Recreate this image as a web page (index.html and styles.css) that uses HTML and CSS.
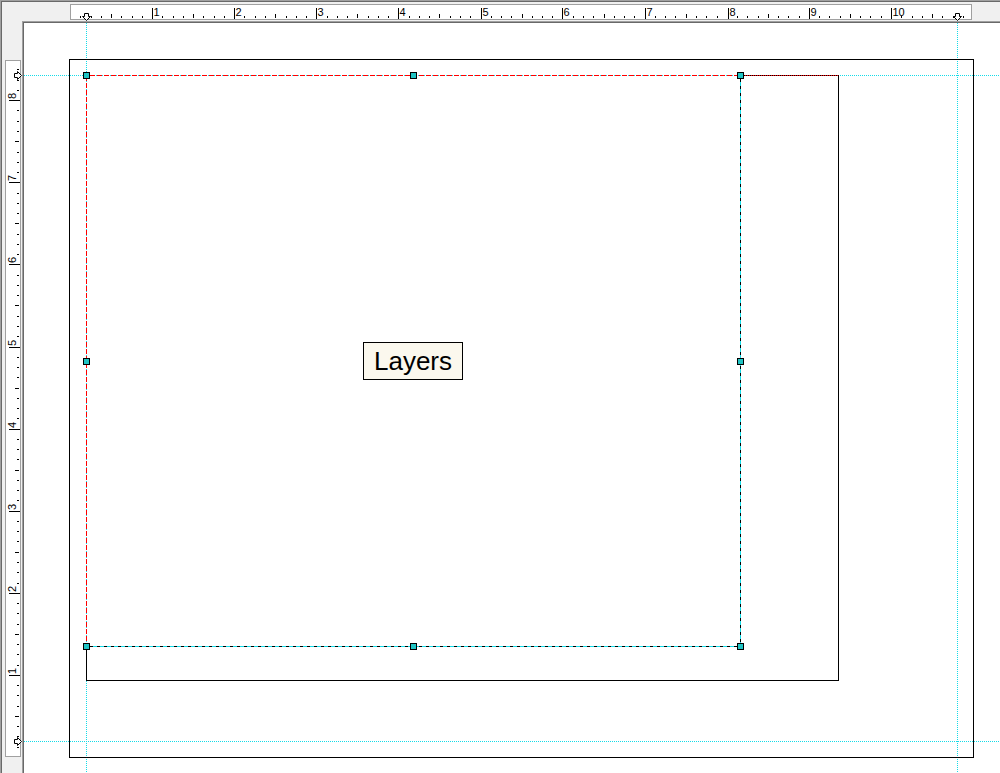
FILE: index.html
```html
<!DOCTYPE html>
<html>
<head>
<meta charset="utf-8">
<title>Layers</title>
<link rel="stylesheet" href="styles.css">
</head>
<body>
<div class="window">
  <div class="frame">
    <div class="corner"></div>
    <div class="top-strip">
      <svg class="hruler" width="902" height="16" viewBox="70 4 902 16">
        <rect class="ruler-bg" x="70.5" y="4.5" width="901" height="15"/>
        <path class="tick" d="M80.5 16v2M91.5 16v2M101.5 16v2M121.5 16v2M132.5 16v2M142.5 16v2M162.5 16v2M173.5 16v2M183.5 16v2M203.5 16v2M214.5 16v2M224.5 16v2M244.5 16v2M255.5 16v2M265.5 16v2M286.5 16v2M296.5 16v2M306.5 16v2M327.5 16v2M337.5 16v2M347.5 16v2M368.5 16v2M378.5 16v2M388.5 16v2M409.5 16v2M419.5 16v2M429.5 16v2M450.5 16v2M460.5 16v2M470.5 16v2M491.5 16v2M501.5 16v2M511.5 16v2M532.5 16v2M542.5 16v2M552.5 16v2M573.5 16v2M583.5 16v2M593.5 16v2M614.5 16v2M624.5 16v2M634.5 16v2M655.5 16v2M665.5 16v2M675.5 16v2M696.5 16v2M706.5 16v2M717.5 16v2M737.5 16v2M747.5 16v2M758.5 16v2M778.5 16v2M788.5 16v2M799.5 16v2M819.5 16v2M829.5 16v2M840.5 16v2M860.5 16v2M870.5 16v2M881.5 16v2M901.5 16v2M912.5 16v2M922.5 16v2M942.5 16v2M953.5 16v2M963.5 16v2"/>
        <path class="tick" d="M111.5 14v4M193.5 14v4M275.5 14v4M357.5 14v4M439.5 14v4M522.5 14v4M604.5 14v4M686.5 14v4M768.5 14v4M850.5 14v4M932.5 14v4"/>
        <path class="tick" d="M152.5 8v11M234.5 8v11M316.5 8v11M398.5 8v11M481.5 8v11M562.5 8v11M645.5 8v11M728.5 8v11M809.5 8v11M891.5 8v11"/>
        <g class="ruler-num">
          <text x="153.5" y="16">1</text>
          <text x="235.5" y="16">2</text>
          <text x="317.5" y="16">3</text>
          <text x="399.5" y="16">4</text>
          <text x="482.5" y="16">5</text>
          <text x="563.5" y="16">6</text>
          <text x="646.5" y="16">7</text>
          <text x="729.5" y="16">8</text>
          <text x="810.5" y="16">9</text>
          <text x="892.5" y="16">10</text>
        </g>
        <polygon class="marker" points="84.5,13.5 88.5,13.5 88.5,16.5 90.5,16.5 86.5,20.5 82.5,16.5 84.5,16.5"/>
        <polygon class="marker" points="955.5,13.5 959.5,13.5 959.5,16.5 961.5,16.5 957.5,20.5 953.5,16.5 955.5,16.5"/>
      </svg>
    </div>
    <div class="left-strip">
      <svg class="vruler" width="16" height="697" viewBox="5 60 16 697">
        <rect class="ruler-bg" x="5.5" y="60.5" width="15" height="696"/>
        <path class="tick" d="M17 747.5h2M17 736.5h2M17 726.5h2M17 706.5h2M17 695.5h2M17 685.5h2M17 665.5h2M17 654.5h2M17 644.5h2M17 624.5h2M17 613.5h2M17 603.5h2M17 583.5h2M17 572.5h2M17 562.5h2M17 541.5h2M17 531.5h2M17 521.5h2M17 500.5h2M17 490.5h2M17 480.5h2M17 459.5h2M17 449.5h2M17 439.5h2M17 418.5h2M17 408.5h2M17 398.5h2M17 377.5h2M17 367.5h2M17 357.5h2M17 336.5h2M17 326.5h2M17 316.5h2M17 295.5h2M17 285.5h2M17 275.5h2M17 254.5h2M17 244.5h2M17 234.5h2M17 213.5h2M17 203.5h2M17 193.5h2M17 172.5h2M17 162.5h2M17 152.5h2M17 131.5h2M17 121.5h2M17 110.5h2M17 90.5h2M17 80.5h2M17 69.5h2"/>
        <path class="tick" d="M15 716.5h4M15 634.5h4M15 552.5h4M15 470.5h4M15 388.5h4M15 305.5h4M15 223.5h4M15 141.5h4"/>
        <path class="tick" d="M9 675.5h11M9 593.5h11M9 511.5h11M9 429.5h11M9 347.5h11M9 264.5h11M9 182.5h11M9 100.5h11"/>
        <g class="ruler-num">
          <text transform="translate(16 674) rotate(-90)">1</text>
          <text transform="translate(16 592) rotate(-90)">2</text>
          <text transform="translate(16 510) rotate(-90)">3</text>
          <text transform="translate(16 428) rotate(-90)">4</text>
          <text transform="translate(16 346) rotate(-90)">5</text>
          <text transform="translate(16 263) rotate(-90)">6</text>
          <text transform="translate(16 181) rotate(-90)">7</text>
          <text transform="translate(16 99) rotate(-90)">8</text>
        </g>
        <polygon class="marker" points="14.5,73.5 17.5,73.5 17.5,71.5 21.5,75.5 17.5,79.5 17.5,77.5 14.5,77.5"/>
        <polygon class="marker" points="14.5,739.5 17.5,739.5 17.5,737.5 21.5,741.5 17.5,745.5 17.5,743.5 14.5,743.5"/>
      </svg>
    </div>
    <div class="canvas-frame">
      <div class="canvas">
        <svg class="drawing" width="976" height="750" viewBox="24 23 976 750">
          <path class="guide" d="M86.5 23V773M957.5 23V773M24 75.5H1000M24 741.5H1000"/>
          <rect class="page" x="69.5" y="59.5" width="904" height="698"/>
          <path class="shape" d="M86.5 646V680.5H838.5V75.5H741"/>
          <path class="edge-dot" d="M741 75.5H838"/>
          <path class="edge-red" d="M86.5 76V643M90 75.5H737"/>
          <path class="edge-cyan" d="M740.5 79V643M90 646.5H737"/>
          <path class="edge-black" d="M740.5 79V643M90 646.5H737"/>
          <g class="handles">
            <rect x="83.5" y="72.5" width="6" height="6"/>
            <rect x="410.5" y="72.5" width="6" height="6"/>
            <rect x="737.5" y="72.5" width="6" height="6"/>
            <rect x="83.5" y="358.5" width="6" height="6"/>
            <rect x="737.5" y="358.5" width="6" height="6"/>
            <rect x="83.5" y="643.5" width="6" height="6"/>
            <rect x="410.5" y="643.5" width="6" height="6"/>
            <rect x="737.5" y="643.5" width="6" height="6"/>
          </g>
        </svg>
        <div class="label">Layers</div>
      </div>
    </div>
  </div>
</div>
</body>
</html>
```

FILE: styles.css
```css
html, body {
  margin: 0;
  padding: 0;
  background: #f0f0f0;
}

body {
  width: 1000px;
  height: 773px;
  overflow: hidden;
  font-family: "Liberation Sans", Arial, sans-serif;
}

.window {
  width: 1000px;
  height: 773px;
  box-sizing: border-box;
  border-top: 1px solid #a0a0a0;
  border-left: 1px solid #a0a0a0;
}

.frame {
  height: 100%;
  box-sizing: border-box;
  border-top: 1px solid #696969;
  border-left: 1px solid #696969;
  display: grid;
  grid-template-columns: 20px 1fr;
  grid-template-rows: 19px 1fr;
}

.top-strip {
  padding: 2px 0 0 48px;
  display: flex;
  align-items: flex-start;
  position: relative;
  z-index: 2;
}

.left-strip {
  padding: 39px 0 0 3px;
  display: flex;
  align-items: flex-start;
  position: relative;
  z-index: 2;
}

.hruler,
.vruler {
  display: block;
  overflow: visible;
  shape-rendering: crispEdges;
}

.ruler-bg {
  fill: #ffffff;
  stroke: #a0a0a0;
}

.tick {
  fill: none;
  stroke: #000000;
}

.ruler-num text {
  font-family: "Liberation Sans", Arial, sans-serif;
  font-size: 11px;
  fill: #000000;
}

.marker {
  fill: #ffffff;
  stroke: #000000;
  shape-rendering: auto;
}

.canvas-frame {
  min-width: 0;
  min-height: 0;
  box-sizing: border-box;
  border-top: 1px solid #a0a0a0;
  border-left: 1px solid #a0a0a0;
}

.canvas {
  position: relative;
  height: 100%;
  box-sizing: border-box;
  border-top: 1px solid #696969;
  border-left: 1px solid #696969;
  background: #ffffff;
  overflow: hidden;
}

.drawing {
  display: block;
  position: absolute;
  left: 0;
  top: 0;
  shape-rendering: crispEdges;
  fill: none;
}

.guide {
  fill: none;
  stroke: #14dce8;
  stroke-dasharray: 1 1;
}

.page,
.shape {
  fill: none;
  stroke: #000000;
}

.edge-dot {
  fill: none;
  stroke: #ff0000;
  stroke-dasharray: 1 1;
}

.edge-red {
  fill: none;
  stroke: #ff0000;
  stroke-dasharray: 5 2;
}

.edge-cyan {
  fill: none;
  stroke: #14dce8;
}

.edge-black {
  fill: none;
  stroke: #000000;
  stroke-dasharray: 3 4;
}

.handles rect {
  fill: #20c4c4;
  stroke: #000000;
}

.label {
  position: absolute;
  left: 339px;
  top: 319px;
  width: 100px;
  height: 38px;
  box-sizing: border-box;
  border: 1px solid #000000;
  background: #fbf8ee;
  display: flex;
  align-items: center;
  justify-content: center;
  padding-top: 1px;
  font-family: "Liberation Sans", Arial, sans-serif;
  font-size: 26px;
  color: #000000;
}
```
